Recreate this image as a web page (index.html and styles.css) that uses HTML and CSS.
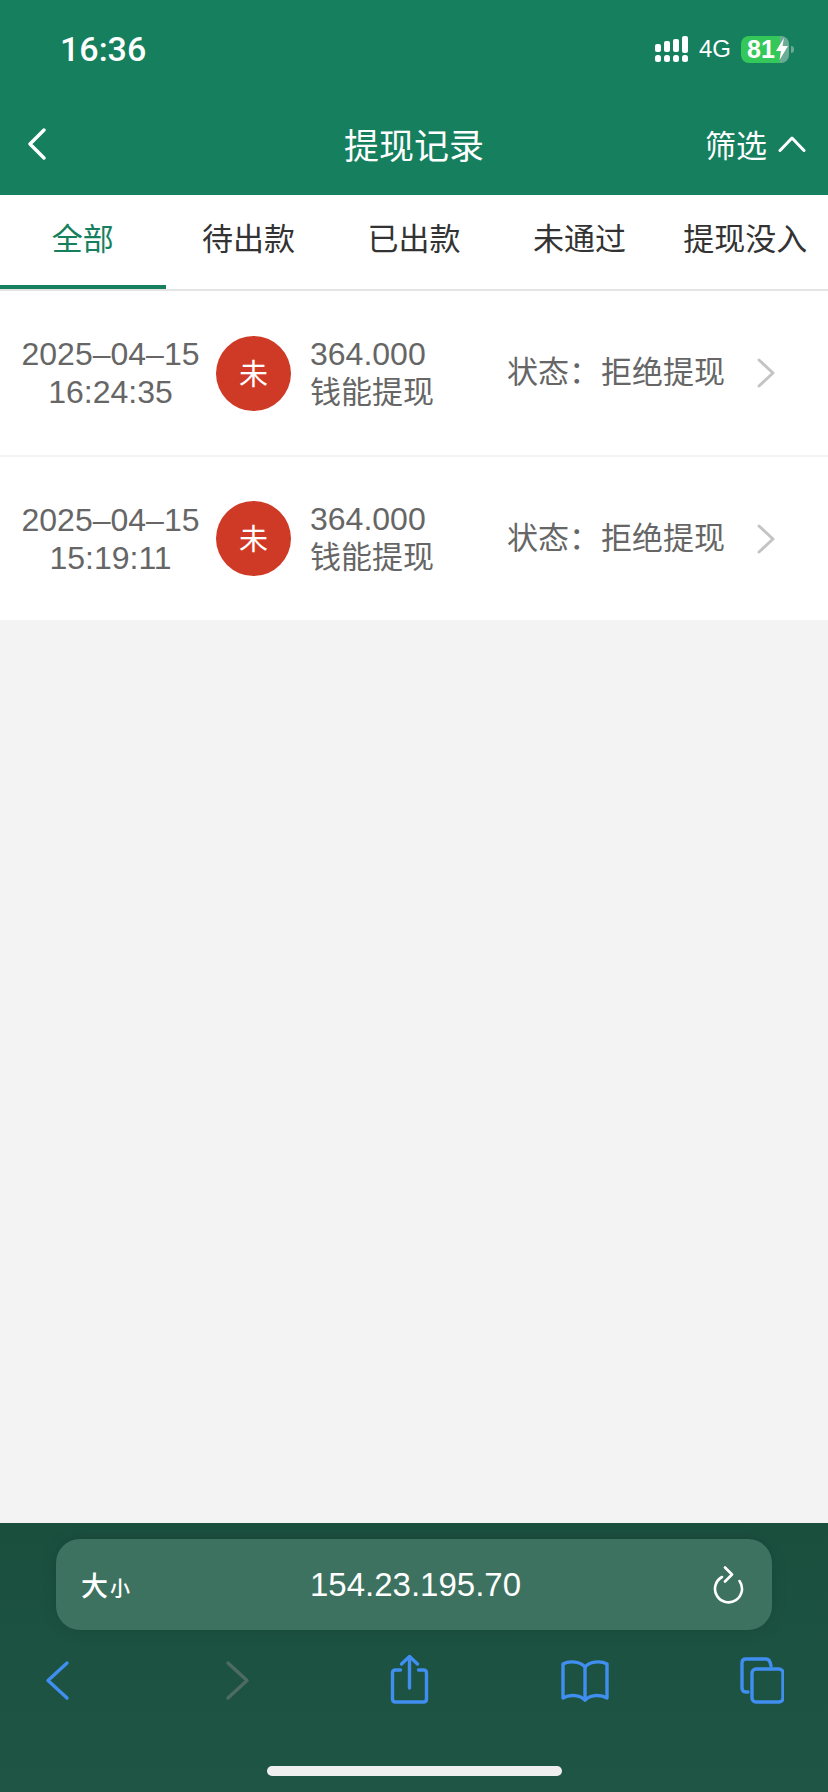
FILE: index.html
```html
<!DOCTYPE html>
<html lang="zh-CN">

<head>
    <meta charset="UTF-8">
    <meta name="viewport" content="width=device-width, initial-scale=1.0">
    <title>提现记录</title>
    <link rel="stylesheet" href="styles.css">
</head>

<body>
    <header class="top">
        <div class="status-bar">
            <span class="clock">16:36</span>
            <div class="status-icons">
                <svg class="signal" width="34" height="27" viewBox="0 0 34 27" fill="#fff">
                    <rect x="0" y="8" width="6" height="8" rx="2" />
                    <rect x="9" y="5" width="6" height="11" rx="2" />
                    <rect x="18" y="3" width="6" height="13" rx="2" />
                    <rect x="27" y="0" width="6" height="17" rx="2" />
                    <rect x="0" y="19" width="6" height="7" rx="2.5" />
                    <rect x="9" y="19" width="6" height="7" rx="2.5" />
                    <rect x="18" y="19" width="6" height="7" rx="2.5" />
                    <rect x="27" y="19" width="6" height="7" rx="2.5" />
                </svg>
                <span class="network">4G</span>
                <div class="battery">
                    <span>81</span>
                    <svg width="12" height="22" viewBox="0 0 12 22" fill="#fff">
                        <path d="M8 0 L0 13 H5 L3.5 22 L12 8 H6.5 Z" />
                    </svg>
                </div>
                <span class="battery-cap"></span>
            </div>
        </div>
        <nav class="nav-bar">
            <svg class="nav-back" width="18" height="32" viewBox="0 0 18 32" fill="none" stroke="#fff" stroke-width="3.4" stroke-linecap="round" stroke-linejoin="round">
                <path d="M16 2 L2 16 L16 30" />
            </svg>
            <h1>提现记录</h1>
            <div class="filter">
                <span>筛选</span>
                <svg width="28" height="16" viewBox="0 0 28 16" fill="none" stroke="#fff" stroke-width="3" stroke-linecap="round" stroke-linejoin="round">
                    <path d="M2 14.5 L14 2 L26 14.5" />
                </svg>
            </div>
        </nav>
    </header>

    <div class="tabs">
        <div class="tab active">全部</div>
        <div class="tab">待出款</div>
        <div class="tab">已出款</div>
        <div class="tab">未通过</div>
        <div class="tab">提现没入</div>
    </div>

    <main class="records">
        <div class="record">
            <div class="record-time">2025–04–15<br>16:24:35</div>
            <div class="record-badge">未</div>
            <div class="record-info">364.000<br><span class="record-name">钱能提现</span></div>
            <div class="record-status">状态：<span class="record-state">拒绝提现</span></div>
            <svg class="record-arrow" width="20" height="30" viewBox="0 0 20 30" fill="none" stroke="#c4c4c4" stroke-width="3" stroke-linecap="round" stroke-linejoin="round">
                <path d="M3 2 L17 15 L3 28" />
            </svg>
        </div>
        <div class="record">
            <div class="record-time">2025–04–15<br>15:19:11</div>
            <div class="record-badge">未</div>
            <div class="record-info">364.000<br><span class="record-name">钱能提现</span></div>
            <div class="record-status">状态：<span class="record-state">拒绝提现</span></div>
            <svg class="record-arrow" width="20" height="30" viewBox="0 0 20 30" fill="none" stroke="#c4c4c4" stroke-width="3" stroke-linecap="round" stroke-linejoin="round">
                <path d="M3 2 L17 15 L3 28" />
            </svg>
        </div>
    </main>

    <!-- 浏览器底部工具栏 -->
    <footer class="browser">
        <div class="url-bar">
            <span class="text-size">大<small>小</small></span>
            <span class="url">154.23.195.70</span>
            <svg class="reload" width="32" height="38" viewBox="0 0 32 38" fill="none" stroke="#fff" stroke-width="2.6" stroke-linecap="round" stroke-linejoin="round">
                <path d="M10 11 A13.5 13.5 0 1 0 27.5 15" />
                <path d="M13 1.5 L20 8.5 L13 15.5" />
            </svg>
        </div>
        <div class="toolbar">
            <svg width="44" height="52" viewBox="0 0 44 52" fill="none" stroke="#3f8ef0" stroke-width="3.4" stroke-linecap="round" stroke-linejoin="round">
                <path d="M32 9 L13 26.5 L32 44" />
            </svg>
            <svg width="44" height="52" viewBox="0 0 44 52" fill="none" stroke="#4d6b60" stroke-width="3.4" stroke-linecap="round" stroke-linejoin="round">
                <path d="M18 9 L37 26.5 L18 44" />
            </svg>
            <svg width="44" height="52" viewBox="0 0 44 52" fill="none" stroke="#3f8ef0" stroke-width="3.4" stroke-linecap="round" stroke-linejoin="round">
                <path d="M15.5 16 H10.5 Q7.5 16 7.5 19 V45 Q7.5 48 10.5 48 H38.5 Q41.5 48 41.5 45 V19 Q41.5 16 38.5 16 H33.5" />
                <path d="M24.5 34 V3" />
                <path d="M16.5 10 L24.5 2.5 L32.5 10" />
            </svg>
            <svg width="50" height="52" viewBox="0 0 50 52" fill="none" stroke="#3f8ef0" stroke-width="3.4" stroke-linecap="round" stroke-linejoin="round">
                <path d="M26 13 C22 8 11 6 4 10 V44 C11 40 21 41 26 46 C31 41 41 40 48 44 V10 C41 6 30 8 26 13 Z" />
                <path d="M26 13 V46" />
            </svg>
            <svg width="44" height="52" viewBox="0 0 44 52" fill="none" stroke="#3f8ef0" stroke-width="3.4" stroke-linecap="round" stroke-linejoin="round">
                <path d="M8 38 H6 Q2 38 2 34 V9 Q2 5 6 5 H26 Q30 5 31 12" />
                <rect x="12" y="15" width="31" height="33" rx="4" />
            </svg>
        </div>
        <div class="home-indicator"></div>
    </footer>
</body>

</html>
```

FILE: styles.css
```css
* {
    box-sizing: border-box;
}

body {
    margin: 0;
    width: 828px;
    height: 1792px;
    display: flex;
    flex-direction: column;
    background-color: #f3f3f3;
    font-family: "Liberation Sans", "Noto Sans CJK SC", sans-serif;
    overflow: hidden;
}

/* 顶部 */
.top {
    background-color: #157f5e;
    color: #fff;
}

.status-bar {
    height: 92px;
    padding: 6px 34px 0 60px;
    display: flex;
    align-items: center;
    justify-content: space-between;
}

.clock {
    font-family: Roboto, sans-serif;
    font-size: 34px;
    font-weight: 500;
}

.status-icons {
    display: flex;
    align-items: center;
}

.network {
    font-size: 24px;
    margin: 0 10px;
}

.battery {
    width: 48px;
    height: 27px;
    border-radius: 8px;
    background: linear-gradient(to right, #34c759 39px, #6cab95 39px);
    display: flex;
    align-items: center;
    padding-left: 6px;
    gap: 1px;
    font-size: 25px;
    font-weight: bold;
}

.battery-cap {
    width: 3px;
    height: 7px;
    margin-left: 2px;
    border-radius: 0 3px 3px 0;
    background-color: #6cab95;
}

.nav-bar {
    height: 103px;
    padding: 0 22px;
    display: grid;
    grid-template-columns: 1fr auto 1fr;
    align-items: center;
}

.nav-back {
    margin-left: 6px;
}

.nav-bar h1 {
    margin: 0;
    font-size: 35px;
    font-weight: normal;
}

.filter {
    justify-self: end;
    display: flex;
    align-items: center;
    gap: 11px;
    font-size: 31px;
}

/* 分类标签 */
.tabs {
    display: grid;
    grid-template-columns: repeat(5, 1fr);
    background-color: #fff;
    border-bottom: 2px solid #e4e4e4;
}

.tab {
    height: 94px;
    padding-top: 27px;
    text-align: center;
    font-size: 31px;
    line-height: 36px;
    color: #333;
    white-space: nowrap;
}

.tab.active {
    color: #157f5e;
    border-bottom: 4px solid #157f5e;
}

/* 记录列表 */
.records {
    background-color: #fff;
}

.record {
    height: 166px;
    display: flex;
    align-items: center;
    color: #666;
    font-size: 32px;
    line-height: 38px;
    border-bottom: 2px solid #f3f3f3;
}

.record:last-child {
    height: 163px;
    border-bottom: 0;
}

.record-time {
    width: 216px;
    padding-left: 5px;
    text-align: center;
    white-space: nowrap;
}

.record-badge {
    width: 75px;
    height: 75px;
    border-radius: 50%;
    background-color: #cf3a27;
    color: #fff;
    font-size: 29px;
    line-height: 79px;
    text-align: center;
}

.record-info {
    width: 216px;
    padding-left: 19px;
    white-space: nowrap;
}

.record-name {
    font-size: 31px;
}

.record-status {
    width: 249px;
    font-size: 31px;
    white-space: nowrap;
}

.record-state {
    margin-left: 1px;
}

.record-arrow {
    flex-shrink: 0;
}

/* 浏览器工具栏 */
.browser {
    margin-top: auto;
    height: 269px;
    padding-top: 16px;
    background: linear-gradient(to bottom, #1a4f3e, #1f5545);
}

.url-bar {
    width: 716px;
    height: 91px;
    margin-left: 56px;
    padding: 0 25px 0 28px;
    border-radius: 24px;
    background-color: #3e7260;
    box-shadow: 0 0 16px rgba(0, 0, 0, 0.12);
    color: #fff;
    display: grid;
    grid-template-columns: 1fr auto 1fr;
    align-items: center;
}

.text-size {
    margin-left: -3px;
    font-size: 27px;
    font-weight: 500;
}

.text-size small {
    font-size: 20px;
    margin-left: 2px;
}

.url {
    font-size: 33px;
}

.reload {
    justify-self: end;
    margin-right: 3px;
}

.toolbar {
    margin-top: 24px;
    padding: 0 44px 0 35px;
    display: flex;
    justify-content: space-between;
}

.home-indicator {
    width: 295px;
    height: 10px;
    margin: 60px auto 0;
    border-radius: 5px;
    background-color: #efefef;
}
```
